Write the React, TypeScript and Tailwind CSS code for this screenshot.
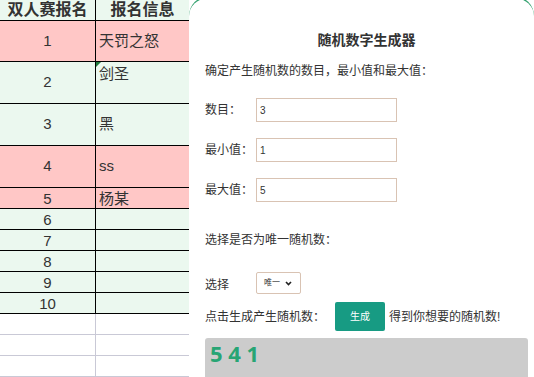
import React from 'react';

const cjk = { fontFamily: '"Liberation Sans", "Noto Sans CJK SC", sans-serif' };

const rows = [
  { n: '1', v: '天罚之怒', h: 'h-[41px]', pink: true, top: false },
  { n: '2', v: '剑圣', h: 'h-[42px]', pink: false, top: true },
  { n: '3', v: '黑', h: 'h-[42px]', pink: false, top: false },
  { n: '4', v: 'ss', h: 'h-[42px]', pink: true, top: false },
  { n: '5', v: '杨某', h: 'h-[21px]', pink: true, top: false },
  { n: '6', v: '', h: 'h-[21px]', pink: false, top: false },
  { n: '7', v: '', h: 'h-[21px]', pink: false, top: false },
  { n: '8', v: '', h: 'h-[21px]', pink: false, top: false },
  { n: '9', v: '', h: 'h-[21px]', pink: false, top: false },
  { n: '10', v: '', h: 'h-[21px]', pink: false, top: false },
];

function Sheet() {
  return (
    <div className="w-[189px] shrink-0 text-[#333]" style={cjk}>
      <div className="grid h-[21px] grid-cols-[96px_93px] border-b border-black bg-[#ebf8ef] text-[16px] font-bold leading-[20px]">
        <div className="border-r border-black text-center">双人赛报名</div>
        <div className="text-center">报名信息</div>
      </div>
      {rows.map((r) => (
        <div
          key={r.n}
          className={`grid grid-cols-[96px_93px] border-b border-black text-[15px] ${r.h} ${r.pink ? 'bg-[#ffc7c6]' : 'bg-[#ebf8ef]'}`}
        >
          <div className="flex items-center justify-center border-r border-black">{r.n}</div>
          <div className={`relative flex pl-[3px] ${r.top ? 'items-start pt-[1px]' : 'items-center'}`}>
            {r.top && (
              <span className="absolute left-0 top-0 h-0 w-0 border-r-[5px] border-t-[5px] border-r-transparent border-t-[#1e7a3c]" />
            )}
            {r.v}
          </div>
        </div>
      ))}
      {[0, 1, 2].map((i) => (
        <div key={i} className="grid h-[21px] grid-cols-[96px_93px] border-b border-[#c9c9d6] bg-white">
          <div className="border-r border-[#c9c9d6]" />
          <div />
        </div>
      ))}
    </div>
  );
}

function Field({ label, value }: { label: string; value: string }) {
  return (
    <div className="flex h-[24px] items-center">
      <span className="w-[51px] text-[12px]">{label}</span>
      <div className="flex h-[24px] w-[141px] items-center border border-[#d9c3b3] pl-[3px] text-[10px]">{value}</div>
    </div>
  );
}

function Generator() {
  return (
    <div
      className="-mt-[4px] h-[381px] w-[345px] shrink-0 rounded-t-[20px] border-t-2 border-[#2e9f6b] bg-white pl-[16px] pr-[6px] pt-[32px] text-[#333]"
      style={cjk}
    >
      <div className="text-center text-[14px] font-bold leading-[20px]">随机数字生成器</div>
      <div className="mt-[12px] text-[12px] leading-[18px]">确定产生随机数的数目，最小值和最大值：</div>
      <div className="mt-[18px] flex flex-col gap-[16px]">
        <Field label="数目：" value="3" />
        <Field label="最小值：" value="1" />
        <Field label="最大值：" value="5" />
      </div>
      <div className="mt-[29px] text-[12px] leading-[18px]">选择是否为唯一随机数：</div>
      <div className="mt-[23px] flex h-[22px] items-center">
        <span className="w-[51px] pt-[3px] text-[12px]">选择</span>
        <div className="flex h-[22px] w-[45px] items-center gap-[5px] rounded-[2px] border border-[#d9c3b3] pl-[7px] text-[8px] leading-none">
          <span>唯一</span>
          <svg width="7" height="5" viewBox="0 0 7 5" className="shrink-0">
            <path d="M1 1 L3.5 3.6 L6 1" fill="none" stroke="#222" strokeWidth="1.6" />
          </svg>
        </div>
      </div>
      <div className="mt-[8px] flex h-[29px] items-center text-[12px]">
        <span className="w-[130px]">点击生成产生随机数：</span>
        <button className="h-[29px] w-[50px] rounded-[2px] bg-[#179b83] text-[10px] text-white">生成</button>
        <span className="ml-[4px]">得到你想要的随机数!</span>
      </div>
      <div
        className="mt-[7px] h-[45px] w-[323px] rounded-[3px] bg-[#cccccc] pl-[5px] text-[22px] font-bold leading-[30px] text-[#27a574]"
        style={{ fontFamily: '"Open Sans", sans-serif' }}
      >
        5 4 1
      </div>
    </div>
  );
}

export default function App() {
  return (
    <div className="flex h-[377px] w-[534px] overflow-hidden bg-white">
      <Sheet />
      <Generator />
    </div>
  );
}
